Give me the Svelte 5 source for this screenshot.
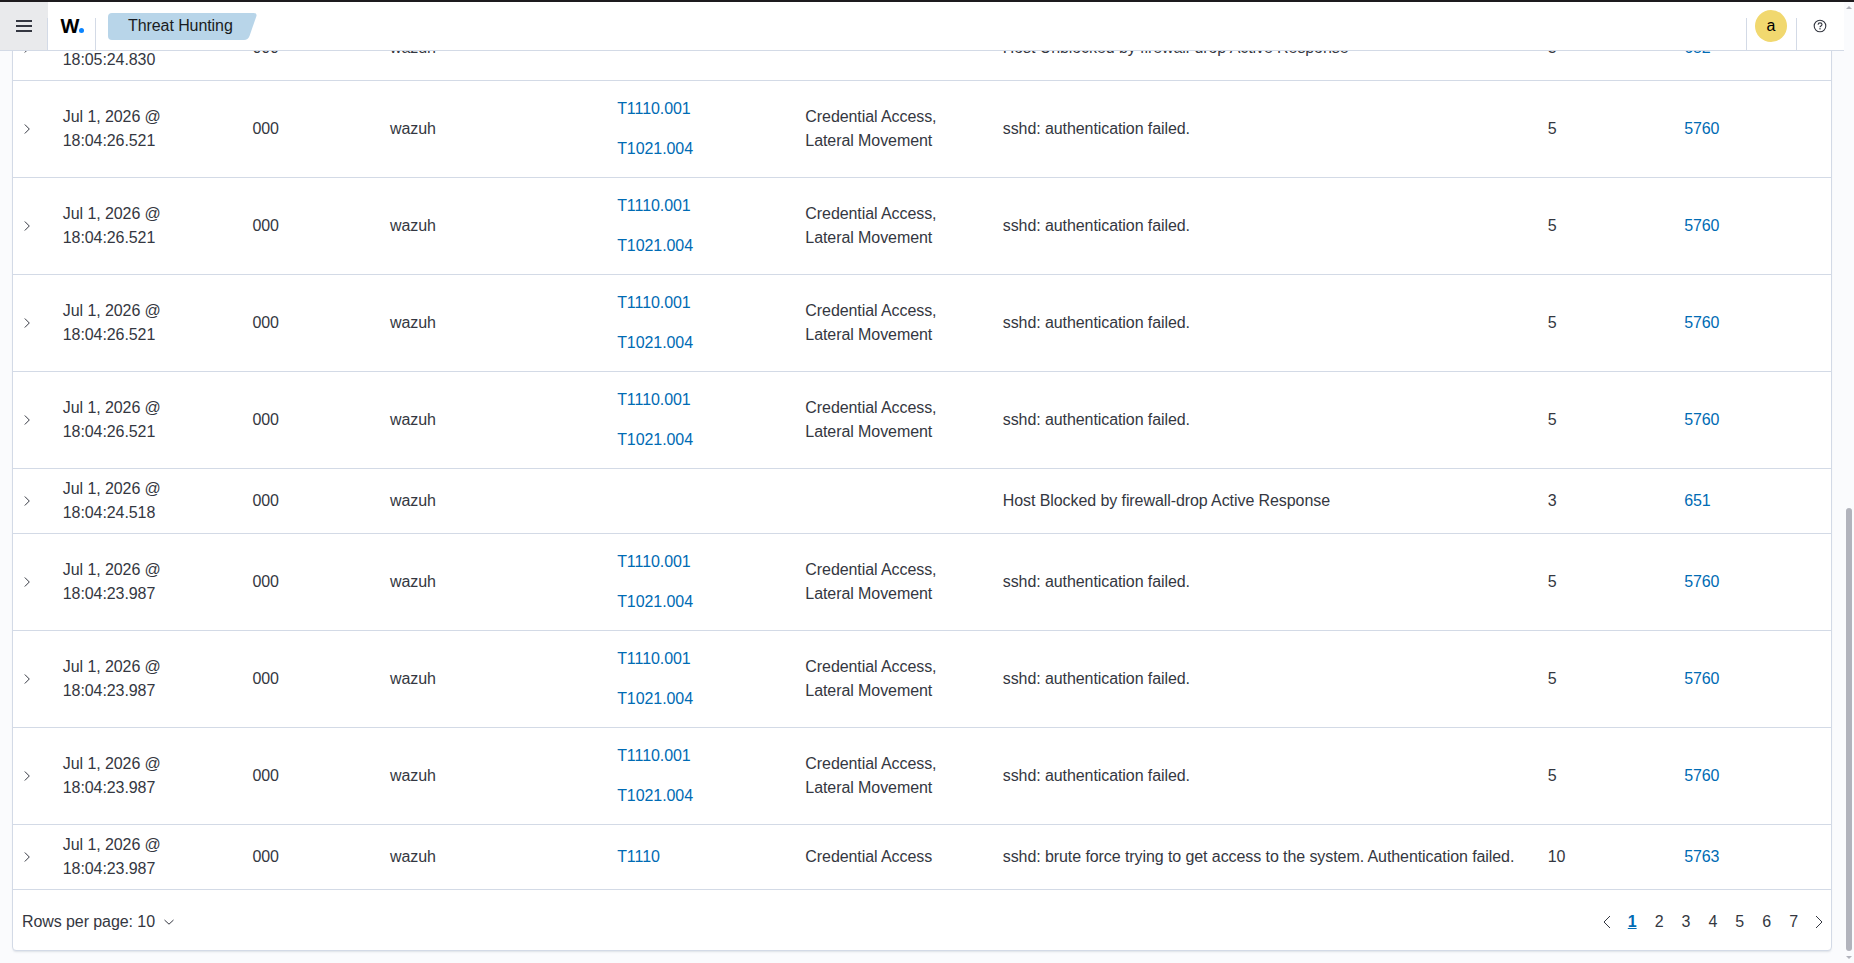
<script>
  const sshFailed = {
    techniques: ["T1110.001", "T1021.004"],
    tactics: "Credential Access, Lateral Movement",
    description: "sshd: authentication failed.",
    level: 5,
    rule: "5760",
  };

  const events = [
    {
      time: "18:05:24.830",
      techniques: [],
      tactics: "",
      description: "Host Unblocked by firewall-drop Active Response",
      level: 3,
      rule: "652",
    },
    { time: "18:04:26.521", ...sshFailed },
    { time: "18:04:26.521", ...sshFailed },
    { time: "18:04:26.521", ...sshFailed },
    { time: "18:04:26.521", ...sshFailed },
    {
      time: "18:04:24.518",
      techniques: [],
      tactics: "",
      description: "Host Blocked by firewall-drop Active Response",
      level: 3,
      rule: "651",
    },
    { time: "18:04:23.987", ...sshFailed },
    { time: "18:04:23.987", ...sshFailed },
    { time: "18:04:23.987", ...sshFailed },
    {
      time: "18:04:23.987",
      techniques: ["T1110"],
      tactics: "Credential Access",
      description:
        "sshd: brute force trying to get access to the system. Authentication failed.",
      level: 10,
      rule: "5763",
    },
  ];

  const pages = [1, 2, 3, 4, 5, 6, 7];
  let currentPage = $state(1);
</script>

{#snippet chevron(d)}
  <svg class="chevron" width="16" height="16" viewBox="0 0 16 16">
    <path {d} />
  </svg>
{/snippet}

<div class="window">
  <div class="main">
    <header>
      <button class="menu" aria-label="Toggle navigation">
        <svg width="16" height="16" viewBox="0 0 16 16">
          <path d="M0 2h16v2H0zM0 7h16v2H0zM0 12h16v2H0z" />
        </svg>
      </button>
      <a class="logo" href="#home"><span>W</span><i></i></a>
      <div class="crumbs">
        <svg width="149" height="27" viewBox="0 0 149 27">
          <path
            d="M4 0H145.5Q149.500 0 148.300 3.500L141.500 23Q140 27 136 27H4Q0 27 0 23V4Q0 0 4 0Z"
          />
        </svg>
        <span>Threat Hunting</span>
      </div>
      <div class="account">
        <span class="avatar">a</span>
      </div>
      <button class="help" aria-label="Help">
        <svg width="16" height="16" viewBox="0 0 16 16">
          <circle cx="8" cy="8" r="5.800" />
          <path d="M6.100 6.800c0-2.600 3.900-2.400 3.900-.2 0 1.400-2 1.300-2 2.600" />
          <path d="M8 10.100v1.300" />
        </svg>
      </button>
    </header>

    <section class="content">
      <div class="panel">
        {#each events as event}
          <div class="row">
            <span>{@render chevron("M5.800 3.500 10.300 8l-4.500 4.500")}</span>
            <span>Jul 1, 2026 @<br />{event.time}</span>
            <span>000</span>
            <span>wazuh</span>
            <span class="techniques">
              {#each event.techniques as technique}
                <a href="#mitre">{technique}</a>
              {/each}
            </span>
            <span class="tactics">{event.tactics}</span>
            <span>{event.description}</span>
            <span>{event.level}</span>
            <span><a href="#rule">{event.rule}</a></span>
          </div>
        {/each}
        <footer>
          <button class="per-page">
            Rows per page: 10
            {@render chevron("M3.500 6 8 10.200 12.500 6")}
          </button>
          <nav>
            <button class="arrow" aria-label="Previous page">
              {@render chevron("M11 2 5 8l6 6")}
            </button>
            {#each pages as page}
              <button
                class="page"
                class:active={page === currentPage}
                onclick={() => (currentPage = page)}>{page}</button
              >
            {/each}
            <button class="arrow" aria-label="Next page">
              {@render chevron("M5 2l6 6-6 6")}
            </button>
          </nav>
        </footer>
      </div>
    </section>
  </div>
  <div class="scrollbar">
    <i class="up"></i>
    <i class="thumb"></i>
    <i class="down"></i>
  </div>
</div>

<style>
  .window {
    box-sizing: border-box;
    display: flex;
    width: 1854px;
    height: 963px;
    overflow: hidden;
    border-top: 2px solid #1d1b1e;
    background: #fafbfd;
    color: #343741;
    font-family: "Liberation Sans", Arial, sans-serif;
    font-size: 16px;
    line-height: 24px;
    letter-spacing: -0.005em;
  }

  .main {
    display: flex;
    flex-direction: column;
    width: 1844px;
  }

  button {
    padding: 0;
    border: none;
    background: none;
    color: inherit;
    font: inherit;
    letter-spacing: inherit;
    cursor: pointer;
  }

  a {
    color: #006bb4;
    text-decoration: none;
  }

  header {
    display: flex;
    flex: none;
    align-items: flex-end;
    height: 48px;
    border-bottom: 1px solid #d3dae6;
    background: #fff;
  }

  .menu {
    display: flex;
    align-items: center;
    justify-content: center;
    width: 48px;
    height: 48px;
    background:
      linear-gradient(#d3dae6, #d3dae6) right bottom / 1px 32px no-repeat,
      #e9eaec;
  }

  .menu svg {
    fill: #343741;
  }

  .logo {
    box-sizing: border-box;
    display: flex;
    align-items: baseline;
    width: 48px;
    height: 32px;
    padding-left: 12.5px;
    border-right: 1px solid #d3dae6;
    color: #000;
    font: 700 19.5px/15px "Open Sans", sans-serif;
    letter-spacing: 0;
  }

  .logo i {
    width: 5px;
    height: 5px;
    border-radius: 50%;
    background: #0a84ff;
  }

  .crumbs {
    display: grid;
    align-self: flex-start;
    margin: 11px auto 0 12px;
    color: #1a1c21;
  }

  .crumbs > * {
    grid-area: 1 / 1;
  }

  .crumbs svg {
    fill: #b8d5e9;
  }

  .crumbs span {
    padding: 1px 0 0 20px;
  }

  .account {
    display: flex;
    width: 49px;
    height: 32px;
    border-left: 1px solid #d3dae6;
    border-right: 1px solid #d3dae6;
  }

  .avatar {
    width: 32px;
    height: 32px;
    margin: -8px 0 0 8px;
    border-radius: 50%;
    background: #f1d86f;
    color: #000;
    font-weight: 500;
    line-height: 32px;
    text-align: center;
  }

  .help {
    box-sizing: border-box;
    display: flex;
    align-items: center;
    justify-content: center;
    width: 47px;
    height: 48px;
    padding-right: 1px;
  }

  .help svg,
  .chevron {
    fill: none;
    stroke: #343741;
  }

  .help svg {
    stroke-width: 1.1;
  }

  .content {
    box-sizing: border-box;
    display: flex;
    flex: 1;
    flex-direction: column;
    justify-content: flex-end;
    min-height: 0;
    overflow: hidden;
    padding: 0 12px 12px;
  }

  .panel {
    flex: none;
    border: 1px solid #d3dae6;
    border-radius: 4px;
    background: #fff;
    box-shadow: 0 2px 2px -1px rgba(152, 162, 179, 0.3);
  }

  .row {
    box-sizing: border-box;
    display: grid;
    grid-template-columns: 49.8px 189.7px 137.500px 227.200px 188.200px 197.400px 545px 136.400px 1fr;
    align-items: center;
    min-height: 65px;
    border-bottom: 1px solid #d3dae6;
  }

  .row .chevron {
    display: block;
    margin-left: 6px;
  }

  .techniques {
    display: flex;
    flex-direction: column;
    gap: 16px;
  }

  .techniques:has(a + a) {
    padding: 16px 0;
  }

  .tactics {
    width: 150px;
  }

  footer {
    box-sizing: border-box;
    display: flex;
    align-items: center;
    justify-content: space-between;
    height: 60px;
    padding: 4px 0 0 9px;
  }

  .per-page {
    display: flex;
    align-items: center;
    gap: 6px;
  }

  nav {
    display: flex;
    align-items: center;
  }

  .page {
    width: 26.9px;
  }

  .page.active {
    color: #006bb4;
    font-weight: 700;
    text-decoration: underline;
  }

  .arrow {
    display: flex;
    justify-content: center;
    width: 24px;
  }

  .scrollbar {
    display: flex;
    flex-direction: column;
    align-items: center;
    width: 10px;
    background: #fafbfd;
  }

  .up,
  .down {
    border: 3px solid transparent;
  }

  .up {
    margin-top: 1px;
    border-bottom-color: #b1b3bc;
  }

  .thumb {
    width: 6px;
    height: 443px;
    margin: 499px 0 5px;
    border-radius: 3px;
    background: #b1b3bc;
  }

  .down {
    border-top-color: #b1b3bc;
  }
</style>
